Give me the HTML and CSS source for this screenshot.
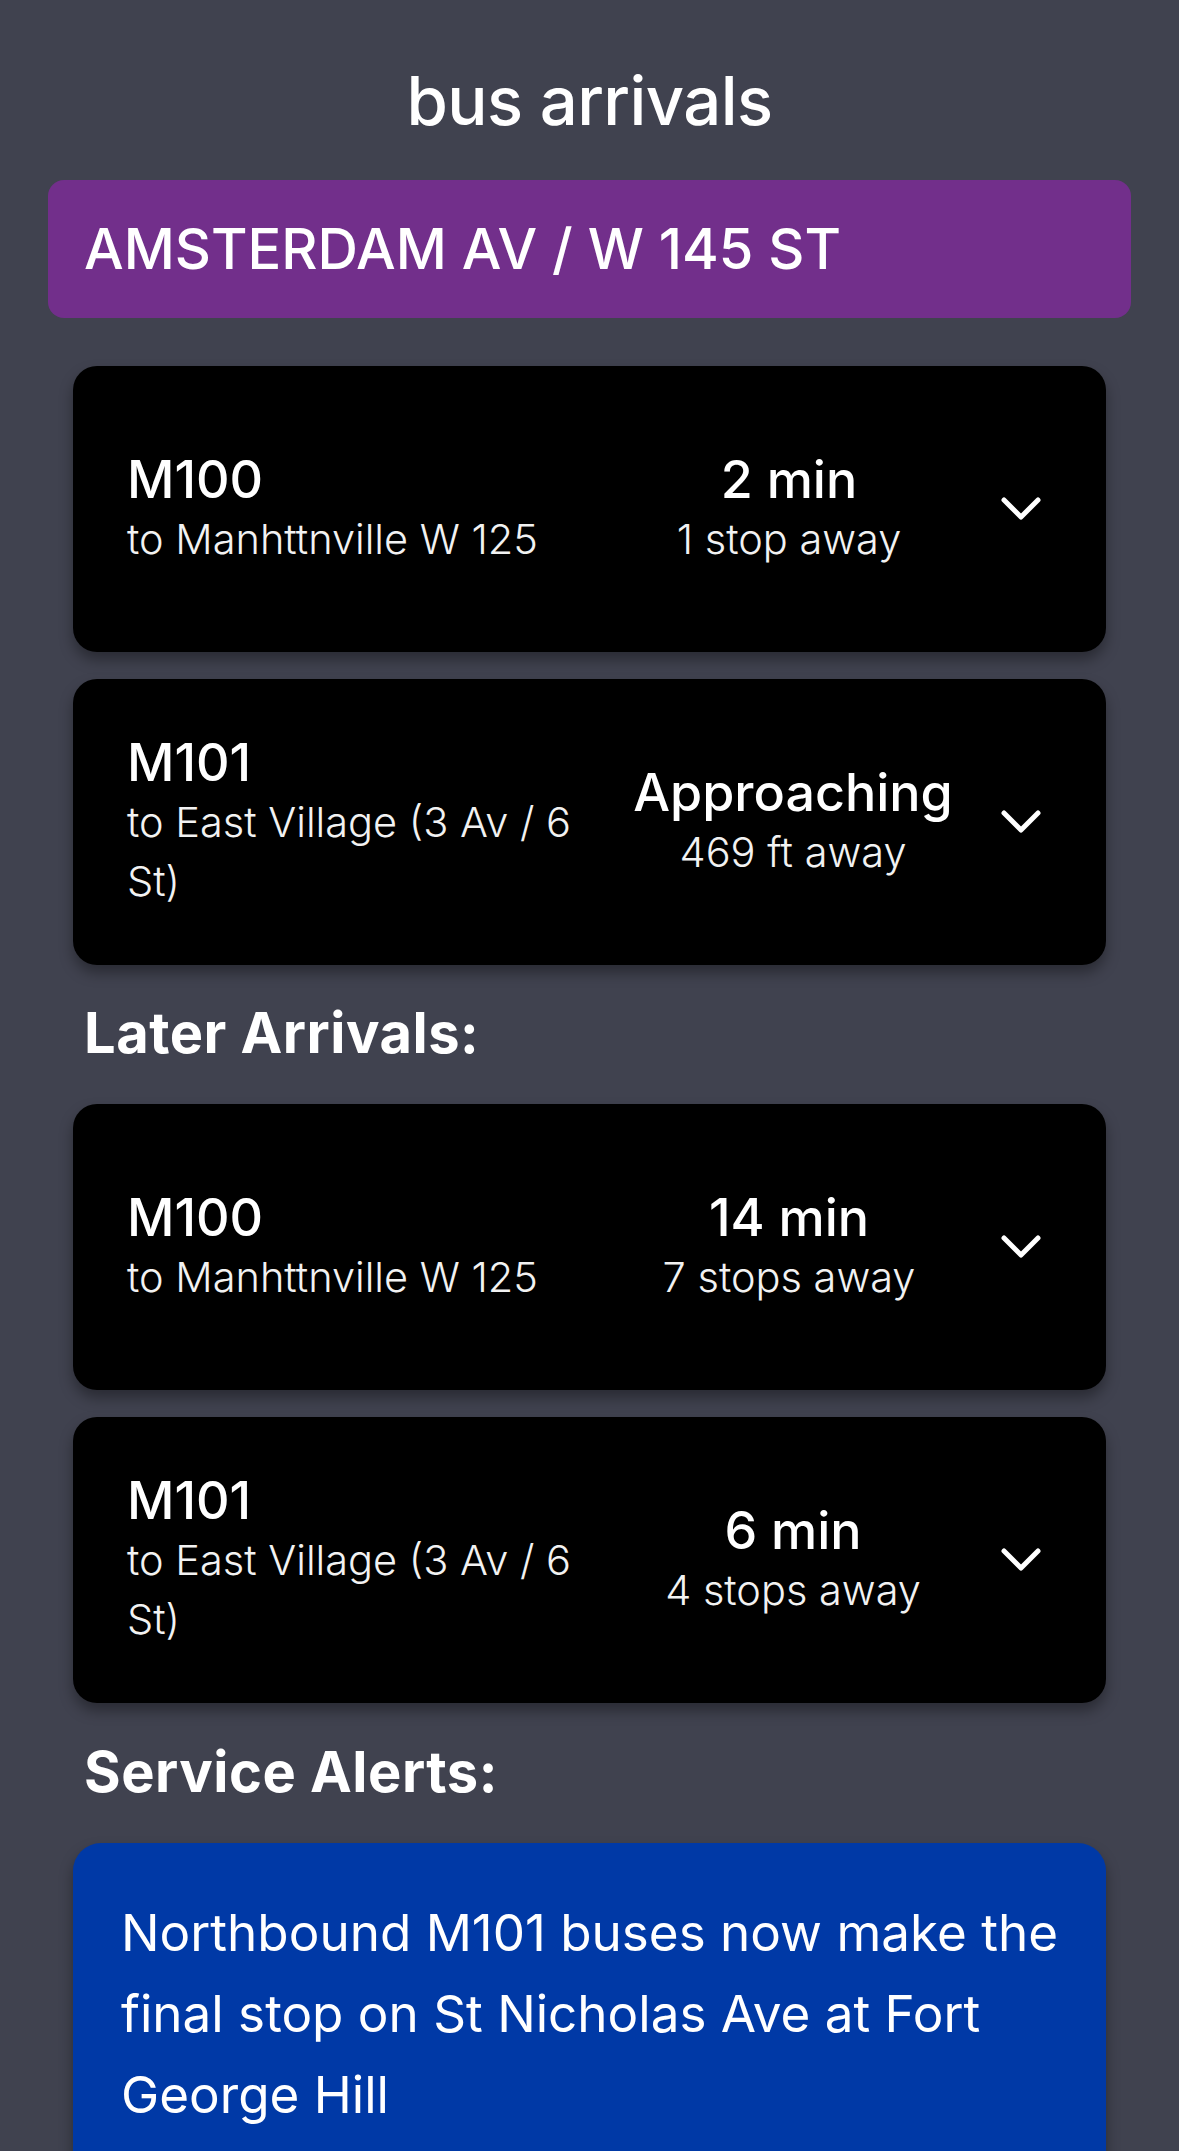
FILE: index.html
```html
<!DOCTYPE html>
<html lang="en">
<head>
<meta charset="utf-8">
<title>bus arrivals</title>
<link rel="stylesheet" href="styles.css">
</head>
<body>
<main class="page">
  <h1 class="title">bus arrivals</h1>
  <div class="stop-bar">AMSTERDAM AV / W 145 ST</div>

  <section class="list">
    <div class="card">
      <div class="route">
        <div class="route-name">M100</div>
        <div class="route-dest">to Manhttnville W 125</div>
      </div>
      <div class="eta">
        <div class="eta-main">2 min</div>
        <div class="eta-sub">1 stop away</div>
      </div>
      <svg class="chev" viewBox="0 0 40 24"><polyline points="3,3 20,20 37,3"/></svg>
    </div>
    <div class="card">
      <div class="route">
        <div class="route-name">M101</div>
        <div class="route-dest">to East Village (3 Av / 6 St)</div>
      </div>
      <div class="eta eta-wide">
        <div class="eta-main">Approaching</div>
        <div class="eta-sub">469 ft away</div>
      </div>
      <svg class="chev" viewBox="0 0 40 24"><polyline points="3,3 20,20 37,3"/></svg>
    </div>
  </section>

  <h2 class="section-title">Later Arrivals:</h2>

  <section class="list">
    <div class="card">
      <div class="route">
        <div class="route-name">M100</div>
        <div class="route-dest">to Manhttnville W 125</div>
      </div>
      <div class="eta">
        <div class="eta-main">14 min</div>
        <div class="eta-sub">7 stops away</div>
      </div>
      <svg class="chev" viewBox="0 0 40 24"><polyline points="3,3 20,20 37,3"/></svg>
    </div>
    <div class="card">
      <div class="route">
        <div class="route-name">M101</div>
        <div class="route-dest">to East Village (3 Av / 6 St)</div>
      </div>
      <div class="eta eta-wide">
        <div class="eta-main">6 min</div>
        <div class="eta-sub">4 stops away</div>
      </div>
      <svg class="chev" viewBox="0 0 40 24"><polyline points="3,3 20,20 37,3"/></svg>
    </div>
  </section>

  <h2 class="section-title alerts-title">Service Alerts:</h2>

  <section class="list">
    <div class="alert">Northbound M101 buses now make the final stop on St Nicholas Ave at Fort George Hill</div>
  </section>
</main>
</body>
</html>
```

FILE: styles.css
```css
html, body {
  margin: 0;
  padding: 0;
  background: #40424f;
}

body {
  font-family: "Inter", "Roboto", "Liberation Sans", sans-serif;
  color: #ffffff;
  height: 2151px;
  overflow: hidden;
}

.page {
  padding: 61px 48px 0 48px;
}

.title {
  margin: 0;
  text-align: center;
  font-size: 67px;
  line-height: 80px;
  font-weight: 500;
  letter-spacing: -0.6px;
}

.stop-bar {
  margin-top: 39px;
  height: 138px;
  box-sizing: border-box;
  padding: 0 36px;
  display: flex;
  align-items: center;
  background: #722f8b;
  border-radius: 16px;
  font-size: 56px;
  font-weight: 500;
  letter-spacing: 0;
}

.list {
  margin: 48px 25px 0 25px;
  display: flex;
  flex-direction: column;
  gap: 27px;
}

.card {
  height: 286px;
  box-sizing: border-box;
  background: #000000;
  border-radius: 24px;
  box-shadow: 0 8px 14px rgba(0, 0, 0, 0.35);
  padding: 0 0 0 54px;
  display: grid;
  grid-template-columns: 460px 404px 60px;
  align-items: center;
}

.route-name {
  font-size: 52px;
  line-height: 60px;
  font-weight: 500;
  letter-spacing: 0;
}

.route-dest {
  font-size: 41.5px;
  line-height: 59px;
  font-weight: 300;
  color: #f2f2f2;
  letter-spacing: 0;
}

.eta {
  text-align: center;
}

.eta-wide {
  padding-left: 8px;
}

.eta-main {
  font-size: 52px;
  line-height: 60px;
  font-weight: 500;
  letter-spacing: 0;
}

.eta-sub {
  font-size: 41.5px;
  line-height: 59px;
  font-weight: 300;
  color: #f2f2f2;
  letter-spacing: 0;
}

.chev {
  width: 40px;
  height: 24px;
  justify-self: center;
  fill: none;
  stroke: #ffffff;
  stroke-width: 5;
  stroke-linecap: round;
  stroke-linejoin: round;
}

.section-title {
  margin: 35px 0 0 0;
  padding-left: 36px;
  font-size: 56px;
  line-height: 66px;
  font-weight: 700;
  letter-spacing: 0.5px;
}

.section-title + .list {
  margin-top: 38px;
}

.alerts-title {
  margin-top: 36px;
}

.alerts-title + .list {
  margin-top: 38px;
}

.alert {
  background: #0039a6;
  border-radius: 28px;
  box-shadow: 0 8px 14px rgba(0, 0, 0, 0.35);
  padding: 49px 40px 60px 48px;
  font-size: 51.2px;
  line-height: 81px;
  font-weight: 400;
  letter-spacing: 0;
}
```
